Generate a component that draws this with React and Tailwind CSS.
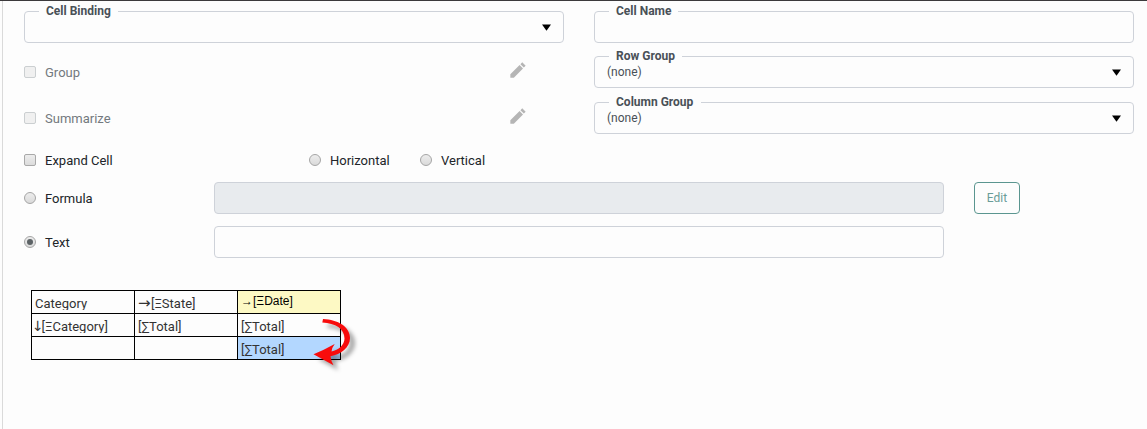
import React from "react";

function Caret() {
  return (
    <svg width="9" height="7" viewBox="0 0 9 7" className="mr-[12px] shrink-0">
      <path d="M0 0.5h9L4.5 6.8z" fill="#000" />
    </svg>
  );
}

function Field({ label, labelClass, value, select }) {
  return (
    <div className="relative flex h-8 w-[540px] items-center justify-between rounded-[4px] border border-[#ced2d9] pl-3">
      <span
        className={`absolute -top-[9px] left-[14px] h-4 bg-[#fdfdfd] pl-[7px] text-[12px] leading-4 font-bold whitespace-nowrap text-[#495057] ${labelClass}`}
      >
        {label}
      </span>
      <span className="text-[12px] text-[#495057]">{value}</span>
      {select && <Caret />}
    </div>
  );
}

function Check({ disabled }) {
  return (
    <span
      className={`block size-3 shrink-0 rounded-[2px] border ${
        disabled ? "border-[#cbcfd1] bg-[#f0f0f0]" : "border-[#a9a9a9] bg-linear-to-b from-[#ededed] to-[#dcdcdc]"
      }`}
    />
  );
}

function Radio({ checked }) {
  return (
    <span className="flex size-3 shrink-0 items-center justify-center rounded-full border border-[#a5a5a5] bg-linear-to-b from-[#ededed] to-[#dadada]">
      {checked && <span className="block size-[6px] rounded-full bg-[#5c6265]" />}
    </span>
  );
}

function Pencil() {
  return (
    <svg width="20" height="20" viewBox="0 0 24 24" fill="#b5b5b5">
      <path d="M2.8 17V21.2H7L18 10.1l-4.1-4.1L2.8 17zM21.2 6.9 17.1 2.8 14.9 5l4.1 4.1 2.2-2.2z" />
    </svg>
  );
}

function DisabledOption({ label }) {
  return (
    <div className="flex h-8 w-[540px] items-center">
      <Check disabled />
      <span className="ml-[9px] grow pt-[2px] text-[#73797e]">{label}</span>
      <span className="mr-9 pb-[4px]">
        <Pencil />
      </span>
    </div>
  );
}

function Arrow({ children, className }) {
  return <span className={`leading-none font-['DejaVu_Sans',sans-serif] ${className}`}>{children}</span>;
}

function Cell({ children, className = "leading-[25px]" }) {
  return (
    <div className={`h-[23px] border-r border-b border-black pl-[3px] ${className}`}>
      <div className="-ml-[3px] h-[19px] overflow-hidden pl-[3px] whitespace-nowrap">{children}</div>
    </div>
  );
}

export default function App() {
  return (
    <div className="flex h-[429px] w-[1147px] overflow-hidden border-t border-[#3c3a3c] bg-[#fdfdfd] pl-[2px] font-['Roboto',sans-serif] text-[13px] text-[#212529]">
      <div className="grow border-l border-[#dadada] pt-[10px] pl-[21px]">
        <div className="flex gap-[30px]">
          <Field label="Cell Binding" labelClass="w-[79px]" select />
          <Field label="Cell Name" labelClass="w-[69px]" />
        </div>
        <div className="mt-[13px] flex gap-[30px]">
          <DisabledOption label="Group" />
          <Field label="Row Group" labelClass="w-[73px]" value="(none)" select />
        </div>
        <div className="mt-[14px] flex gap-[30px]">
          <DisabledOption label="Summarize" />
          <Field label="Column Group" labelClass="w-[92px]" value="(none)" select />
        </div>

        <div className="mt-4 flex h-5 items-center">
          <div className="flex w-[285px] items-center gap-[9px]">
            <Check />
            <span className="pt-[2px]">Expand Cell</span>
          </div>
          <div className="flex w-[111px] items-center gap-[9px]">
            <Radio />
            <span className="pt-[2px]">Horizontal</span>
          </div>
          <div className="flex items-center gap-[9px]">
            <Radio />
            <span className="pt-[2px]">Vertical</span>
          </div>
        </div>

        <div className="mt-3 flex h-8 items-center">
          <div className="flex w-[190px] items-center gap-[9px]">
            <Radio />
            <span className="pt-[2px]">Formula</span>
          </div>
          <div className="h-8 w-[730px] rounded-[4px] border border-[#ced2d9] bg-[#e8ebee]" />
          <button className="ml-[30px] h-8 w-[46px] rounded-[4px] border border-[#5b9690] text-[12px] text-[#6a9c97]">
            Edit
          </button>
        </div>
        <div className="mt-3 flex h-8 items-center">
          <div className="flex w-[190px] items-center gap-[9px]">
            <Radio checked />
            <span className="pt-[2px]">Text</span>
          </div>
          <div className="h-8 w-[730px] rounded-[4px] border border-[#ced2d9]" />
        </div>

        <div className="relative mt-8 ml-[7px] w-[310px]">
          <div className="grid grid-cols-[103px_103px_103px] border-t border-l border-black text-[#333]">
            <Cell>Category</Cell>
            <Cell>
              <Arrow className="mr-[0.4px] text-[15px]">→</Arrow>[ΞState]
            </Cell>
            <Cell className="bg-[#fdf9c4] font-['Liberation_Sans',sans-serif] text-[12px] leading-[17px] text-black">
              <span className="block pt-[2px]">→[ΞDate]</span>
            </Cell>
            <Cell>
              <Arrow className="-mr-[2.2px] -ml-[3px] text-[14px]">↓</Arrow>
              [ΞCategory]
            </Cell>
            <Cell>[∑Total]</Cell>
            <Cell>[∑Total]</Cell>
            <Cell />
            <Cell />
            <Cell className="bg-[#b3d7ff] leading-[25px]">[∑Total]</Cell>
          </div>
          <svg
            className="absolute top-[24px] left-[276px] drop-shadow-[5px_5px_2px_rgba(0,0,0,0.35)]"
            width="56"
            height="60"
            viewBox="307 314 56 60"
          >
            <path
              d="M323 319C338 319.5 350 327 350 338C350 347.5 341 354.5 330.5 356.2Q331 361 333.5 365.3L313.5 354.3Q324 350 334.7 344Q332 347.5 331.5 351.5C338.5 350 344.5 345 344.5 338.5C344.5 329 335.5 323.2 322.3 322.6Z"
              fill="#f80c0c"
            />
          </svg>
        </div>
      </div>
    </div>
  );
}
